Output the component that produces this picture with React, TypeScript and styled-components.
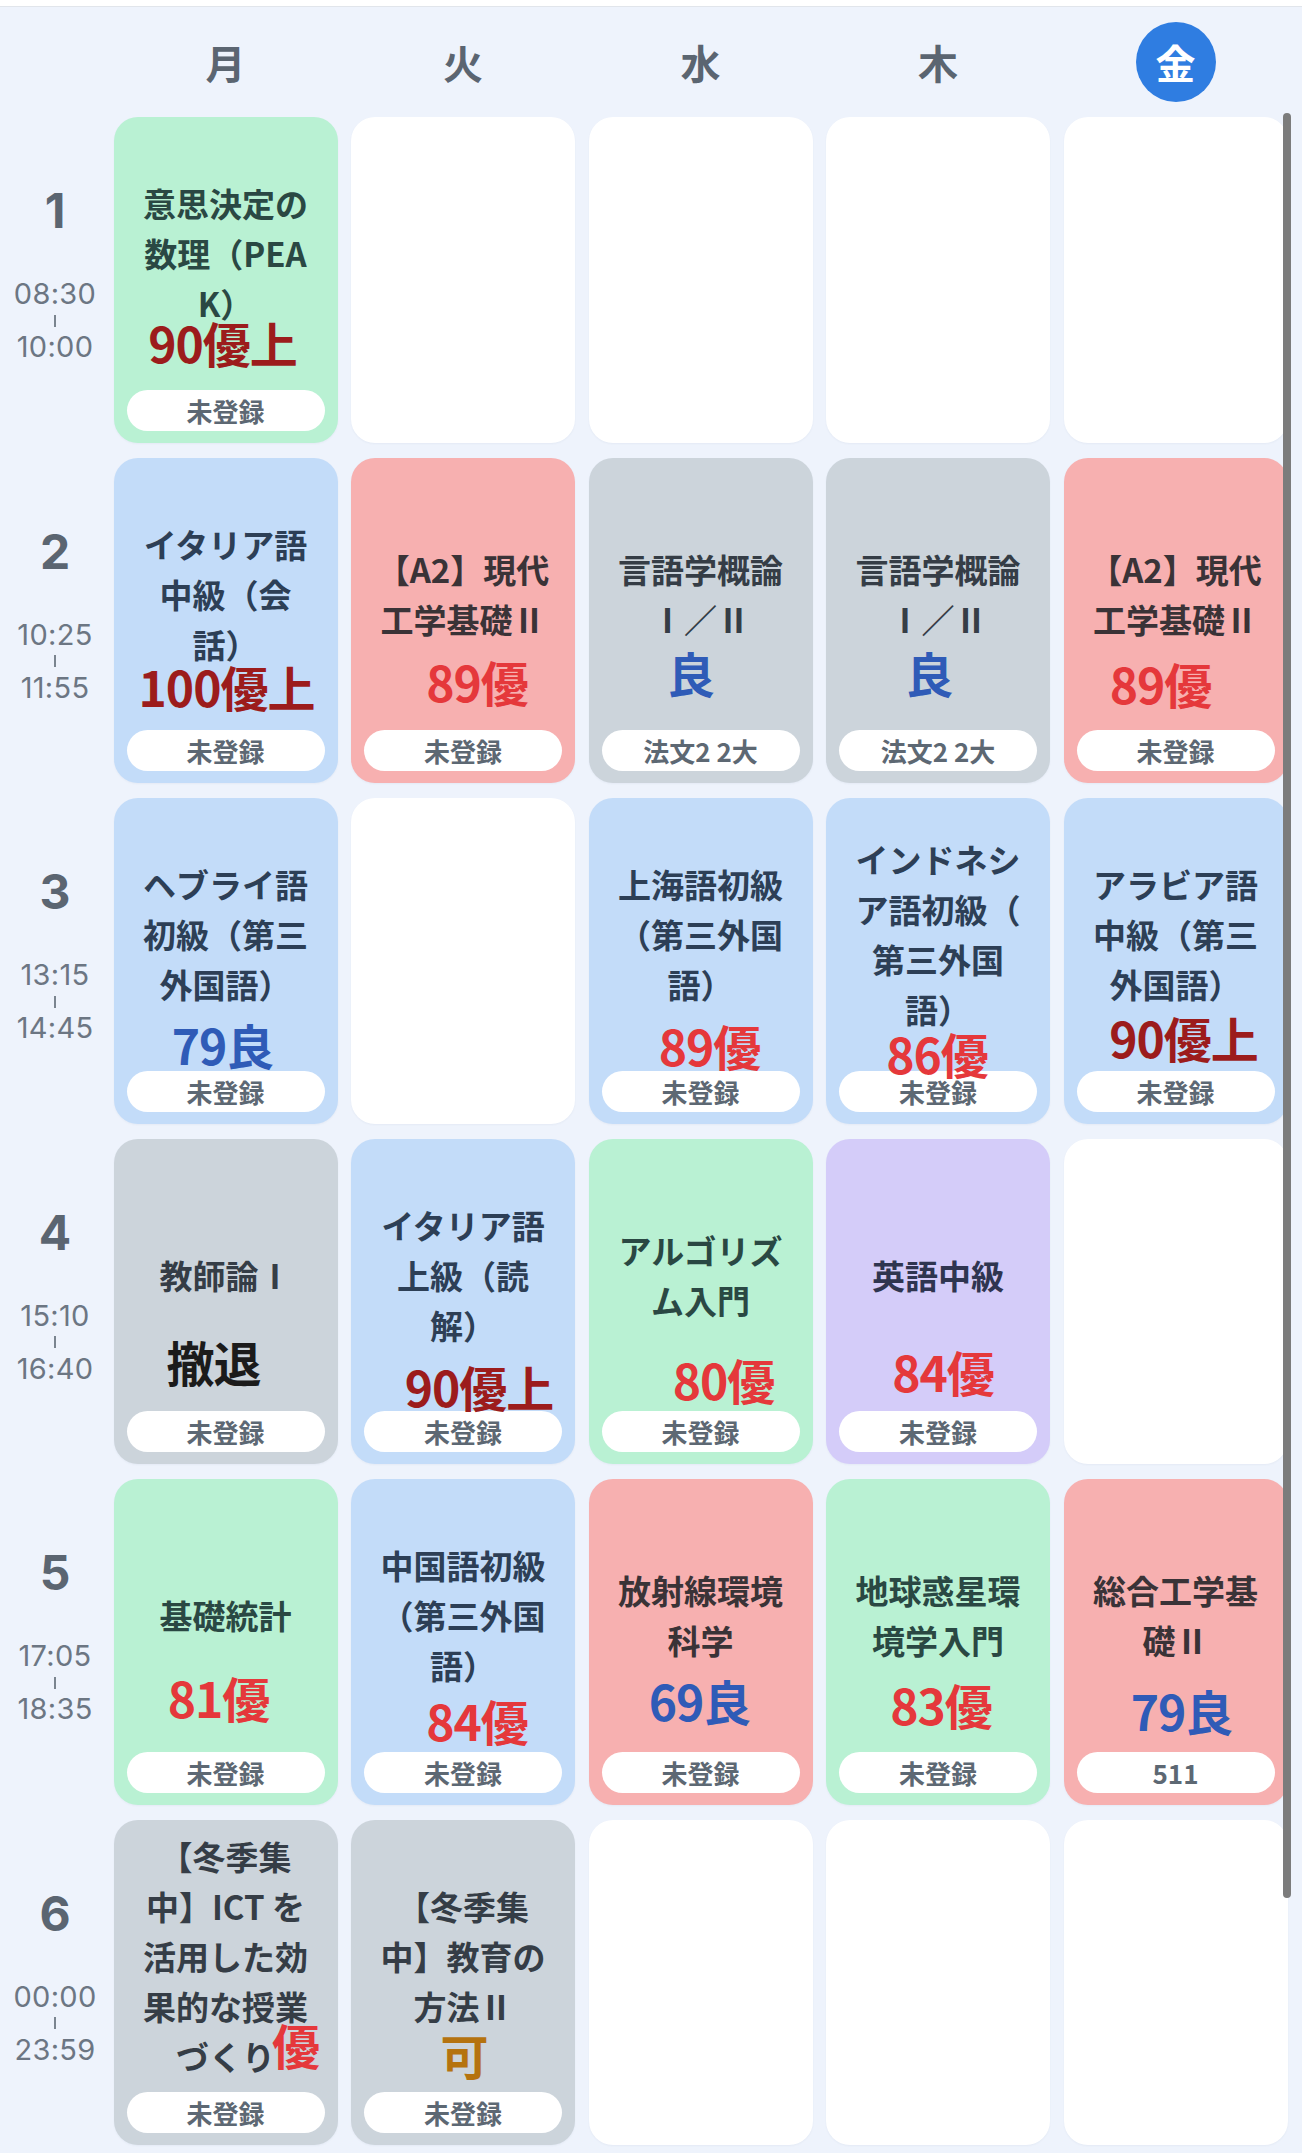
import React from "react";
import styled, { createGlobalStyle } from "styled-components";

type Tone = "green" | "blue" | "red" | "gray" | "purple";
type GradeKind = "top" | "exc" | "good" | "pass" | "withdraw";

interface Course {
  tone: Tone;
  lines: string[];
  grade: string;
  kind: GradeKind;
  gy: number;
  dx: number;
  badge?: string;
}

type Cell = Course | null;

const toneBg: Record<Tone, string> = {
  green: "#b9f1d3",
  blue: "#c3dcf9",
  red: "#f7b0b0",
  gray: "#ccd4db",
  purple: "#d4ccf9",
};

const toneText: Record<Tone, string> = {
  green: "#2a4843",
  blue: "#2d3f56",
  red: "#3a3337",
  gray: "#353d46",
  purple: "#2f3550",
};

const gradeColor: Record<GradeKind, string> = {
  top: "#9c1c1c",
  exc: "#e5383b",
  good: "#2f5bb7",
  pass: "#b5730f",
  withdraw: "#1b1b1b",
};

const periods = [
  { n: "1", from: "08:30", to: "10:00" },
  { n: "2", from: "10:25", to: "11:55" },
  { n: "3", from: "13:15", to: "14:45" },
  { n: "4", from: "15:10", to: "16:40" },
  { n: "5", from: "17:05", to: "18:35" },
  { n: "6", from: "00:00", to: "23:59" },
];

const days = ["月", "火", "水", "木", "金"];

const table: Cell[][] = [
  [
    { tone: "green", lines: ["意思決定の", "数理（PEA", "K）"], grade: "90優上", kind: "top", gy: 225, dx: -3 },
    null,
    null,
    null,
    null,
  ],
  [
    { tone: "blue", lines: ["イタリア語", "中級（会", "話）"], grade: "100優上", kind: "top", gy: 228, dx: 1 },
    { tone: "red", lines: ["【A2】現代", "工学基礎Ⅱ"], grade: "89優", kind: "exc", gy: 223, dx: 14 },
    { tone: "gray", lines: ["言語学概論", "Ⅰ／Ⅱ"], grade: "良", kind: "good", gy: 214, dx: -10, badge: "法文2 2大" },
    { tone: "gray", lines: ["言語学概論", "Ⅰ／Ⅱ"], grade: "良", kind: "good", gy: 214, dx: -9, badge: "法文2 2大" },
    { tone: "red", lines: ["【A2】現代", "工学基礎Ⅱ"], grade: "89優", kind: "exc", gy: 225, dx: -15 },
  ],
  [
    { tone: "blue", lines: ["ヘブライ語", "初級（第三", "外国語）"], grade: "79良", kind: "good", gy: 246, dx: -3 },
    null,
    { tone: "blue", lines: ["上海語初級", "（第三外国", "語）"], grade: "89優", kind: "exc", gy: 247, dx: 9 },
    { tone: "blue", lines: ["インドネシ", "ア語初級（", "第三外国", "語）"], grade: "86優", kind: "exc", gy: 255, dx: -1 },
    { tone: "blue", lines: ["アラビア語", "中級（第三", "外国語）"], grade: "90優上", kind: "top", gy: 239, dx: 8 },
  ],
  [
    { tone: "gray", lines: ["教師論Ⅰ"], grade: "撤退", kind: "withdraw", gy: 222, dx: -12 },
    { tone: "blue", lines: ["イタリア語", "上級（読", "解）"], grade: "90優上", kind: "top", gy: 247, dx: 16 },
    { tone: "green", lines: ["アルゴリズ", "ム入門"], grade: "80優", kind: "exc", gy: 240, dx: 23 },
    { tone: "purple", lines: ["英語中級"], grade: "84優", kind: "exc", gy: 232, dx: 5 },
    null,
  ],
  [
    { tone: "green", lines: ["基礎統計"], grade: "81優", kind: "exc", gy: 218, dx: -7 },
    { tone: "blue", lines: ["中国語初級", "（第三外国", "語）"], grade: "84優", kind: "exc", gy: 241, dx: 14 },
    { tone: "red", lines: ["放射線環境", "科学"], grade: "69良", kind: "good", gy: 221, dx: -1 },
    { tone: "green", lines: ["地球惑星環", "境学入門"], grade: "83優", kind: "exc", gy: 225, dx: 3 },
    { tone: "red", lines: ["総合工学基", "礎Ⅱ"], grade: "79良", kind: "good", gy: 231, dx: 6, badge: "511" },
  ],
  [
    { tone: "gray", lines: ["【冬季集", "中】ICT を", "活用した効", "果的な授業", "づくり"], grade: "優", kind: "exc", gy: 224, dx: 70 },
    { tone: "gray", lines: ["【冬季集", "中】教育の", "方法Ⅱ"], grade: "可", kind: "pass", gy: 234, dx: 1 },
    null,
    null,
    null,
  ],
];

const GlobalStyle = createGlobalStyle`
  html, body {
    margin: 0;
    padding: 0;
    background: #eef3fc;
  }
  body {
    font-family: "Noto Sans CJK JP", "Noto Sans", sans-serif;
    overflow: hidden;
  }
`;

const Page = styled.div`
  position: relative;
  width: 1302px;
  height: 2153px;
  background: #eef3fc;
  overflow: hidden;
`;

const TopStrip = styled.div`
  height: 6px;
  background: #ffffff;
  border-bottom: 1px solid #e1e5eb;
`;

const Grid = styled.div`
  display: grid;
  grid-template-columns: 100px repeat(5, 224px);
  grid-template-rows: 95px repeat(6, 325.5px);
  column-gap: 13.5px;
  row-gap: 15px;
`;

const HeaderCell = styled.div`
  display: flex;
  align-items: center;
  justify-content: center;
  padding-top: 14px;
  box-sizing: border-box;
`;

const DayLabel = styled.div<{ $active?: boolean }>`
  width: 80px;
  height: 80px;
  border-radius: 50%;
  display: flex;
  align-items: center;
  justify-content: center;
  font-family: "Noto Sans CJK JP", sans-serif;
  font-size: 40px;
  font-weight: 700;
  color: ${(p) => (p.$active ? "#ffffff" : "#5b6571")};
  background: ${(p) => (p.$active ? "#2f7de1" : "transparent")};
`;

const PeriodCell = styled.div`
  display: flex;
  flex-direction: column;
  align-items: center;
  padding: 64px 0 0 10px;
  box-sizing: border-box;
`;

const PeriodNum = styled.div`
  font-family: Inter, "Liberation Sans", sans-serif;
  font-size: 48px;
  font-weight: 700;
  line-height: 60px;
  color: #5b6571;
`;

const Times = styled.div`
  margin-top: 40px;
  display: flex;
  flex-direction: column;
  align-items: center;
`;

const TimeText = styled.div`
  font-family: Inter, "Liberation Sans", sans-serif;
  font-size: 29px;
  font-weight: 400;
  line-height: 26px;
  letter-spacing: 0.3px;
  color: #6c7683;
`;

const TimeDivider = styled.div`
  width: 2px;
  height: 12px;
  margin: 7.5px 0;
  background: #7a848f;
`;

const Card = styled.div<{ $tone?: Tone }>`
  position: relative;
  display: flex;
  flex-direction: column;
  box-sizing: border-box;
  padding: 0 13px 12px;
  border-radius: 24px;
  background: ${(p) => (p.$tone ? toneBg[p.$tone] : "#ffffff")};
  box-shadow: 0 1px 2px rgba(60, 80, 120, 0.05);
`;

const CardBody = styled.div`
  flex: 1;
  display: flex;
  flex-direction: column;
  align-items: center;
  justify-content: center;
  text-align: center;
`;

const TitleLine = styled.div<{ $tone: Tone }>`
  font-family: "Noto Sans CJK JP", sans-serif;
  font-size: 33px;
  line-height: 50px;
  font-weight: 700;
  white-space: nowrap;
  color: ${(p) => toneText[p.$tone]};
`;

const Grade = styled.div<{ $kind: GradeKind; $gy: number; $dx: number }>`
  position: absolute;
  left: 50%;
  top: ${(p) => p.$gy - 28}px;
  transform: translateX(calc(-50% + ${(p) => p.$dx}px));
  font-family: "Noto Sans CJK JP", sans-serif;
  font-size: 48px;
  line-height: 56px;
  font-weight: 700;
  letter-spacing: -1px;
  white-space: nowrap;
  color: ${(p) => gradeColor[p.$kind]};
`;

const Badge = styled.div`
  flex-shrink: 0;
  height: 41px;
  border-radius: 21px;
  background: #ffffff;
  display: flex;
  align-items: center;
  justify-content: center;
  font-family: "Noto Sans CJK JP", sans-serif;
  font-size: 26px;
  font-weight: 700;
  color: #5d6873;
`;

const ScrollThumb = styled.div`
  position: absolute;
  left: 1283px;
  top: 113px;
  width: 8px;
  height: 1785px;
  border-radius: 4px;
  background: #7c7c7c;
`;

function CourseCard({ c }: { c: Cell }) {
  if (!c) return <Card />;
  return (
    <Card $tone={c.tone}>
      <CardBody>
        {c.lines.map((l, i) => (
          <TitleLine key={i} $tone={c.tone}>
            {l}
          </TitleLine>
        ))}
      </CardBody>
      <Grade $kind={c.kind} $gy={c.gy} $dx={c.dx}>
        {c.grade}
      </Grade>
      <Badge>{c.badge ?? "未登録"}</Badge>
    </Card>
  );
}

export default function App() {
  return (
    <Page>
      <GlobalStyle />
      <TopStrip />
      <Grid>
        <HeaderCell />
        {days.map((d, i) => (
          <HeaderCell key={d}>
            <DayLabel $active={i === 4}>{d}</DayLabel>
          </HeaderCell>
        ))}
        {table.map((row, r) => (
          <React.Fragment key={r}>
            <PeriodCell>
              <PeriodNum>{periods[r].n}</PeriodNum>
              <Times>
                <TimeText>{periods[r].from}</TimeText>
                <TimeDivider />
                <TimeText>{periods[r].to}</TimeText>
              </Times>
            </PeriodCell>
            {row.map((c, i) => (
              <CourseCard key={i} c={c} />
            ))}
          </React.Fragment>
        ))}
      </Grid>
      <ScrollThumb />
    </Page>
  );
}
